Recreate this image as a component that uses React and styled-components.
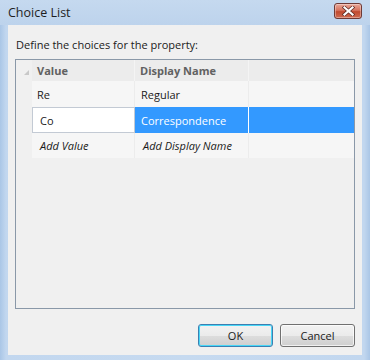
import React from "react";
import styled, { createGlobalStyle } from "styled-components";

const Global = createGlobalStyle`
  html, body { margin: 0; padding: 0; background: #c4d8ee; }
  #root { width: 370px; height: 360px; }
  * { box-sizing: border-box; }
`;

const Window = styled.div`
  width: 370px;
  height: 360px;
  display: flex;
  flex-direction: column;
  background: linear-gradient(90deg, #aac6e6 0px, #c2d7ef 6px, #c6daf0 50%, #c2d7ef calc(100% - 6px), #aac6e6 100%);
  font-family: "Open Sans", "Noto Sans", sans-serif;
  font-size: 11px;
  color: #000;
`;

const TitleBar = styled.div`
  height: 25px;
  display: flex;
  align-items: center;
  justify-content: space-between;
  padding: 0 8px 0 8px;
  background: linear-gradient(180deg, #c5d9ef 0%, #bdd3ec 100%);
`;

const Title = styled.span`
  font-size: 12.5px;
  color: #1e1e1e;
  margin-top: -1px;
`;

const CloseBtn = styled.div`
  width: 28px;
  height: 16px;
  margin-top: -3px;
  border: 1px solid #6e3a36;
  border-radius: 3px;
  background: linear-gradient(180deg, #e9a99a 0%, #d7735e 45%, #c04a2f 55%, #cf6b52 100%);
  display: flex;
  align-items: center;
  justify-content: center;
  box-shadow: inset 0 0 0 1px rgba(255,255,255,0.35);
`;

const Client = styled.div`
  flex: 1;
  margin: 0 8px 5px 8px;
  background: #f0f0f0;
  display: flex;
  flex-direction: column;
  padding: 12px 7px 8px 7px;
`;

const Label = styled.div`
  height: 16px;
  line-height: 16px;
  padding-left: 1px;
  margin-bottom: 6px;
  color: #1a1a1a;
`;

const Grid = styled.div`
  height: 250px;
  border: 1px solid #8a98a8;
  background: #f0f0f0;
  display: flex;
  flex-direction: column;
`;

const Row = styled.div`
  display: grid;
  grid-template-columns: 16px 103px 114px 1fr;
  height: ${(p) => p.$h}px;
`;

const Corner = styled.div`
  display: flex;
  align-items: flex-end;
  justify-content: flex-end;
  padding: 0 3px 6px 0;
`;

const HeadCell = styled.div`
  display: flex;
  align-items: center;
  padding-left: ${(p) => p.$pl}px;
  font-weight: 700;
  color: #616161;
  background: #ececec;
  border-right: 1px solid ${(p) => (p.$last ? "transparent" : "#f4f4f4")};
`;

const RowHead = styled.div`
  background: #f0f0f0;
`;

const Cell = styled.div`
  display: flex;
  align-items: center;
  padding-left: ${(p) => p.$pl}px;
  background: ${(p) => (p.$sel ? "#3399ff" : p.$edit ? "#ffffff" : "#f6f6f6")};
  color: ${(p) => (p.$sel ? "#ffffff" : "#1a1a1a")};
  font-style: ${(p) => (p.$italic ? "italic" : "normal")};
  border-right: 1px solid ${(p) => (p.$last ? "transparent" : p.$sel ? "#ffffff" : "#ececec")};
  ${(p) => (p.$edit ? "border: 1px solid #c3cad4; border-right: 1px solid #c3cad4;" : "")}
`;

const Footer = styled.div`
  margin-top: auto;
  display: flex;
  justify-content: flex-end;
  gap: 7px;
`;

const Button = styled.button`
  width: 75px;
  height: 23px;
  font-family: inherit;
  font-size: 11px;
  color: #1a1a1a;
  border-radius: 3px;
  border: 1px solid ${(p) => (p.$def ? "#3c7fb1" : "#707070")};
  background: linear-gradient(180deg, #f2f2f2 0%, #ebebeb 50%, #dddddd 51%, #cfcfcf 100%);
  box-shadow: inset 0 0 0 1px ${(p) => (p.$def ? "#48d7f7" : "rgba(255,255,255,0.7)")};
  padding: 0;
`;

export default function App() {
  return (
    <>
      <Global />
      <Window>
        <TitleBar>
          <Title>Choice List</Title>
          <CloseBtn>
            <svg width="13" height="10" viewBox="0 0 13 10">
              <path d="M2.5 1.5 L10.5 8.5 M10.5 1.5 L2.5 8.5" stroke="#5a2a24" strokeWidth="3.6" strokeLinecap="square" />
              <path d="M2.5 1.5 L10.5 8.5 M10.5 1.5 L2.5 8.5" stroke="#ffffff" strokeWidth="2.2" strokeLinecap="square" />
            </svg>
          </CloseBtn>
        </TitleBar>
        <Client>
          <Label>Define the choices for the property:</Label>
          <Grid>
            <Row $h={21}>
              <Corner>
                <svg width="5" height="5" viewBox="0 0 5 5">
                  <path d="M5 0 L5 5 L0 5 Z" fill="#c8c8c8" />
                </svg>
              </Corner>
              <HeadCell $pl={5}>Value</HeadCell>
              <HeadCell $pl={5}>Display Name</HeadCell>
              <HeadCell $last />
            </Row>
            <Row $h={26}>
              <RowHead />
              <Cell $pl={5}>Re</Cell>
              <Cell $pl={6}>Regular</Cell>
              <Cell $last />
            </Row>
            <Row $h={26}>
              <RowHead />
              <Cell $pl={7} $edit>Co</Cell>
              <Cell $pl={6} $sel>Correspondence</Cell>
              <Cell $sel $last />
            </Row>
            <Row $h={25}>
              <RowHead />
              <Cell $pl={8} $italic>Add Value</Cell>
              <Cell $pl={8} $italic>Add Display Name</Cell>
              <Cell $last />
            </Row>
          </Grid>
          <Footer>
            <Button $def>OK</Button>
            <Button>Cancel</Button>
          </Footer>
        </Client>
      </Window>
    </>
  );
}
